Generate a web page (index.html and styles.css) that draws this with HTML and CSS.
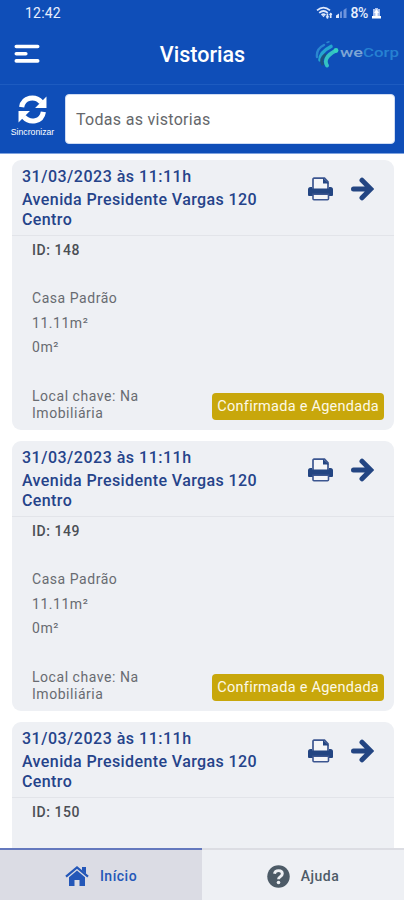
FILE: index.html
```html
<!DOCTYPE html>
<html lang="pt-BR">

<head>
  <meta charset="UTF-8">
  <meta name="viewport" content="width=device-width, initial-scale=1.0">
  <title>Vistorias</title>
  <link rel="stylesheet" href="styles.css">
</head>

<body>
  <svg class="sprite">
    <symbol id="printer" viewBox="0 0 26 24">
      <path d="M5 12V2.200a1 1 0 0 1 1-1h10.500L20 4.800V12" fill="#f4f5f8" stroke="#3c5690" stroke-width="1.700"/>
      <path d="M15 1v5.500H21z" fill="currentColor"/>
      <path d="M2.500 10H4v1.500h17V10h1.500a2.500 2.500 0 0 1 2.500 2.500V18a1 1 0 0 1-1 1H1a1 1 0 0 1-1-1v-5.500A2.500 2.500 0 0 1 2.500 10z" fill="currentColor"/>
      <path d="M5 17.200h15.500v4.600a1 1 0 0 1-1 1H6a1 1 0 0 1-1-1z" fill="#f4f5f8" stroke="#3c5690" stroke-width="1.600"/>
    </symbol>
    <symbol id="arrow" viewBox="0 0 24 24">
      <path d="M3.500 12h16M12 3.200L20.800 12 12 20.800" fill="none" stroke="currentColor" stroke-width="5" stroke-linecap="round"/>
    </symbol>
  </svg>

  <header class="top">
    <div class="status">
      <span class="clock">12:42</span>
      <svg class="status-net" viewBox="0 0 33 14">
        <g fill="none" stroke="#dfe8fb" stroke-width="1.700">
          <path d="M1 4.300Q7.500-1.200 14 4.300M3.200 6.800q4.300-3.600 8.600 0M5.500 9q2-1.700 4 0"/>
          <path d="M11.400 7.500v5M14.700 7v5"/>
        </g>
        <path d="M5.800 9.200h3.400l-1.700 2zM9.600 10.200h3.600l-1.800 2.600zM13 9l1.700-2.500L16.400 9z" fill="#dfe8fb"/>
        <path d="M20 12V9.500l3-2V12z" fill="#dfe8fb"/>
        <path d="M24 12V6l2-1v7zM27.500 12V4l3-2v10z" fill="#6d93dc"/>
      </svg>
      <span class="percent">8%</span>
      <svg class="battery" viewBox="0 0 9 13">
        <path d="M3 1h3v1h2v7H1V2h2z" fill="#a9c0ee"/>
        <path d="M4.500 2L7 6H5.600v3H9v2.500H0V9h3.400V6H2z" fill="#fff"/>
      </svg>
    </div>
    <div class="bar">
      <svg class="menu" viewBox="0 0 26 20">
        <path d="M2.300 2.500h21.400M2.300 9.700h9.500M2.300 16.900h21.400" stroke="#fff" stroke-width="3.600" stroke-linecap="round"/>
      </svg>
      <h1>Vistorias</h1>
      <div class="logo">
        <svg class="logo-mark" viewBox="0 0 24 28">
          <g fill="none" stroke-linecap="round">
            <path d="M2 17Q1 9 9 5" stroke="#2a87d0" stroke-width="2.400"/>
            <path d="M12 2.500l2-.8" stroke="#2a87d0" stroke-width="1.500"/>
            <path d="M5 20Q5 12 16 6.500" stroke="#25a5cf" stroke-width="3.600"/>
            <path d="M7.500 24Q5 19 10 15" stroke="#1d527f" stroke-width="3"/>
            <path d="M12 25.500Q7.500 18 20 11" stroke="#34c2c3" stroke-width="3.800"/>
          </g>
          <circle cx="21" cy="10.500" r="2.400" fill="#35d3bd"/>
        </svg>
        <svg class="logo-name" viewBox="0 0 60 16">
          <text x="0" y="11" textLength="23" lengthAdjust="spacingAndGlyphs" class="logo-we">we</text>
          <text x="23" y="11" textLength="36" lengthAdjust="spacingAndGlyphs" class="logo-corp">Corp</text>
        </svg>
      </div>
    </div>
    <div class="filter">
      <button class="sync">
        <svg class="sync-icon" viewBox="0 0 28 28">
          <g fill="none" stroke="#fff" stroke-width="5">
            <path d="M3.500 11.800C5 2 16.500.3 22.500 7"/>
            <path d="M24.500 16.200C23 26 11.500 27.700 5.500 21"/>
          </g>
          <path d="M27.500 1.500v11h-11zM.5 26.500v-11h11z" fill="#fff"/>
        </svg>
        <span>Sincronizar</span>
      </button>
      <div class="select">Todas as vistorias</div>
    </div>
  </header>

  <main class="list">
    <article class="card">
      <div class="card-head">
        <div class="card-title">
          <p class="date">31/03/2023 às 11:11h</p>
          <p class="address">Avenida Presidente Vargas 120<br>Centro</p>
        </div>
        <svg class="printer"><use href="#printer"/></svg>
        <svg class="arrow"><use href="#arrow"/></svg>
      </div>
      <div class="card-body">
        <p class="card-id">ID: 148</p>
        <p class="kind">Casa Padrão</p>
        <p>11.11m²</p>
        <p>0m²</p>
        <div class="card-foot">
          <p class="key">Local chave: Na Imobiliária</p>
          <span class="badge">Confirmada e Agendada</span>
        </div>
      </div>
    </article>

    <article class="card">
      <div class="card-head">
        <div class="card-title">
          <p class="date">31/03/2023 às 11:11h</p>
          <p class="address">Avenida Presidente Vargas 120<br>Centro</p>
        </div>
        <svg class="printer"><use href="#printer"/></svg>
        <svg class="arrow"><use href="#arrow"/></svg>
      </div>
      <div class="card-body">
        <p class="card-id">ID: 149</p>
        <p class="kind">Casa Padrão</p>
        <p>11.11m²</p>
        <p>0m²</p>
        <div class="card-foot">
          <p class="key">Local chave: Na Imobiliária</p>
          <span class="badge">Confirmada e Agendada</span>
        </div>
      </div>
    </article>

    <article class="card">
      <div class="card-head">
        <div class="card-title">
          <p class="date">31/03/2023 às 11:11h</p>
          <p class="address">Avenida Presidente Vargas 120<br>Centro</p>
        </div>
        <svg class="printer"><use href="#printer"/></svg>
        <svg class="arrow"><use href="#arrow"/></svg>
      </div>
      <div class="card-body">
        <p class="card-id">ID: 150</p>
      </div>
    </article>
  </main>

  <nav class="tabs">
    <a class="tab tab-active">
      <svg class="home" viewBox="0 0 24 20">
        <path d="M1 10.700L12 1.500l11 9.200" fill="none" stroke="currentColor" stroke-width="2.200"/>
        <path d="M17 1h4v7l-4-3.500z" fill="currentColor"/>
        <path d="M12 4.500l8 6.700V20h-5.500v-6h-5v6H4v-8.800z" fill="currentColor"/>
      </svg>
      Início
    </a>
    <a class="tab">
      <svg class="help" viewBox="0 0 24 24">
        <circle cx="12" cy="12" r="11.700" fill="currentColor"/>
        <path d="M7.800 9.200C8.500 4.800 16 4.800 16 9.200c0 3-4 2.800-4 5.600" fill="none" stroke="#eef0f4" stroke-width="3"/>
        <circle cx="12" cy="18.300" r="1.900" fill="#eef0f4"/>
      </svg>
      Ajuda
    </a>
  </nav>
</body>

</html>
```
FILE: styles.css
```css
*,
*::before,
*::after {
  margin: 0;
  padding: 0;
  box-sizing: border-box;
}
body {
  display: flex;
  flex-direction: column;
  height: 900px;
  overflow: hidden;
  background: #fff;
  font-family: Roboto, "Liberation Sans", sans-serif;
  color: #686b71;
}
.sprite {
  display: none;
}
svg {
  flex: none;
}
.top {
  flex: none;
  height: 154px;
  background: #0f4eb8;
  border-bottom: 1px solid #7fa3df;
  color: #fff;
}
.status {
  display: flex;
  align-items: center;
  height: 26px;
  padding: 0 23px 0 25px;
  color: #e8effd;
}
.clock {
  flex: 1;
  font-size: 14px;
  letter-spacing: 0.2px;
}
.status-net {
  width: 33px;
  height: 14px;
}
.percent {
  margin-left: 2px;
  font-size: 14px;
  font-weight: 500;
  letter-spacing: -0.4px;
}
.battery {
  width: 9px;
  height: 13px;
  margin-left: 4px;
}
.bar {
  display: grid;
  grid-template-columns: 90px 1fr 90px;
  align-items: center;
  height: 58px;
  padding: 0 4px 0 14px;
}
.menu {
  width: 26px;
  height: 20px;
  margin-bottom: 3px;
}
h1 {
  padding-right: 9px;
  font-size: 21.5px;
  font-weight: 500;
  line-height: 58px;
  text-align: center;
}
.logo {
  display: flex;
  align-items: center;
  padding: 0 0 2px 5px;
}
.logo-mark {
  width: 24px;
  height: 28px;
}
.logo-name {
  width: 60px;
  height: 16px;
  margin-left: 1px;
}
.logo-we,
.logo-corp {
  font-size: 12px;
  font-weight: 500;
}
.logo-we {
  fill: #7da5d5;
}
.logo-corp {
  fill: #2681d2;
}
.filter {
  display: flex;
  height: 69px;
  padding: 9px 9px 9px 10px;
  border-top: 1px solid #1d5bc0;
}
.sync {
  display: flex;
  flex-direction: column;
  align-items: center;
  width: 45px;
  margin-right: 10px;
  border: 0;
  background: none;
  color: #fff;
  font: 8.7px "Liberation Sans", sans-serif;
  line-height: 11px;
}
.sync-icon {
  width: 29px;
  height: 29px;
  margin: 1px 0 3px;
}
.select {
  flex: 1;
  height: 50px;
  padding-left: 10px;
  border: 1px solid #cfdcf3;
  border-radius: 4px;
  background: #fff;
  color: #65676b;
  font-size: 16px;
  letter-spacing: 0.3px;
  line-height: 49px;
}
.list {
  flex: 1;
  display: flex;
  flex-direction: column;
  gap: 11px;
  min-height: 0;
  padding: 6px 10px 0 12px;
  overflow: hidden;
}
.card {
  flex: none;
  height: 270px;
  border-radius: 9px;
  background: #eef0f4;
}
.card-head {
  display: flex;
  height: 76px;
  padding: 6px 20px 0 10px;
  border-bottom: 1px solid #e2e4e9;
  color: #25438a;
}
.card-title {
  flex: 1;
  font-size: 16px;
  font-weight: 500;
  line-height: 20px;
}
.date {
  height: 24px;
  line-height: 22px;
  letter-spacing: 0.5px;
}
.address {
  letter-spacing: 0.4px;
}
.printer {
  width: 26px;
  height: 24px;
  margin-top: 11px;
  color: #234582;
}
.arrow {
  width: 24px;
  height: 24px;
  margin: 11px 0 0 16px;
  color: #234582;
}
.card-body {
  padding: 2px 10px 0 20px;
  font-size: 14px;
  letter-spacing: 0.54px;
  line-height: 24.4px;
}
.card-id {
  color: #4b4e54;
  font-weight: 500;
}
.kind {
  margin-top: 24px;
}
.card-foot {
  display: flex;
  justify-content: space-between;
  margin-top: 28px;
}
.key {
  width: 120px;
  line-height: 17px;
}
.badge {
  height: 27px;
  margin-top: 5px;
  padding: 0 5px;
  border-radius: 4px;
  background: #c8a70b;
  color: #fdf9e6;
  font-size: 14.5px;
  letter-spacing: 0.26px;
  line-height: 28px;
}
.tabs {
  display: flex;
  flex: none;
  height: 52px;
}
.tab {
  display: flex;
  flex: 1;
  align-items: center;
  justify-content: center;
  gap: 11px;
  padding-top: 2px;
  border-top: 2px solid #dcdde3;
  background: #eef0f4;
  color: #4d5b67;
  font-size: 14px;
  font-weight: 500;
  letter-spacing: 0.5px;
}
.tab-active {
  border-color: #6478bd;
  background: #dbdce4;
  color: #2457b8;
}
.home {
  width: 24px;
  height: 20px;
}
.help {
  width: 23px;
  height: 23px;
}
```
